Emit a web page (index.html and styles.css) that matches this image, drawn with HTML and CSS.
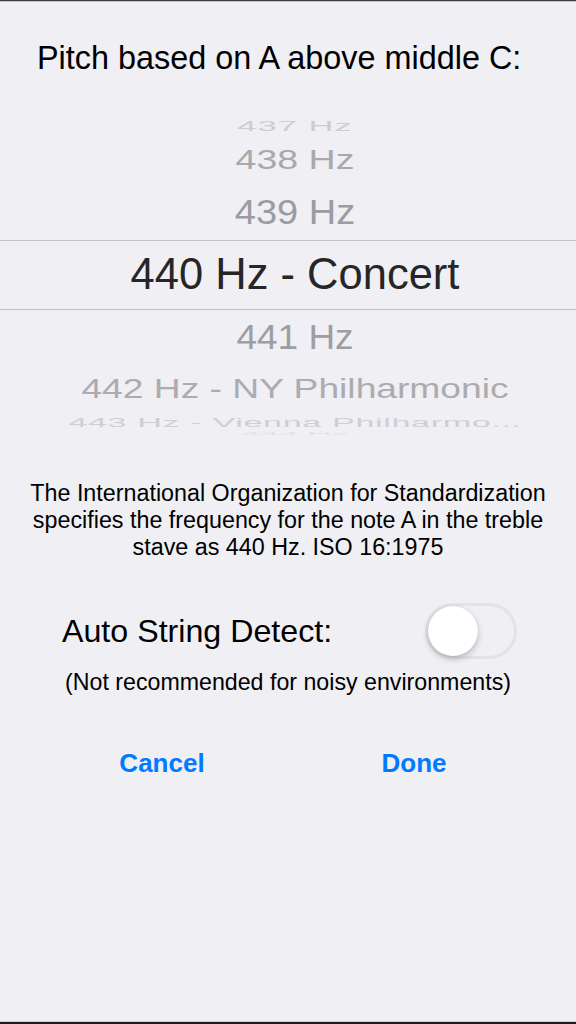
FILE: index.html
```html
<!DOCTYPE html>
<html lang="en">
<head>
  <meta charset="UTF-8">
  <title>Pitch Settings</title>
  <link rel="stylesheet" href="styles.css">
</head>
<body>
<div class="screen">
  <h1 class="title">Pitch based on A above middle C:</h1>

  <!-- wheel picker: rows further from the middle are squashed and faded -->
  <div class="picker">
    <div class="picker-row r-3"><span>437 Hz</span></div>
    <div class="picker-row r-2"><span>438 Hz</span></div>
    <div class="picker-row r-1"><span>439 Hz</span></div>
    <div class="picker-row selected"><span>440 Hz - Concert</span></div>
    <div class="picker-row r1"><span>441 Hz</span></div>
    <div class="picker-row r2"><span>442 Hz - NY Philharmonic</span></div>
    <div class="picker-row r3"><span>443 Hz - Vienna Philharmo...</span></div>
    <div class="picker-row r4"><span>444 Hz</span></div>
  </div>

  <p class="about">The International Organization for Standardization<br>
    specifies the frequency for the note A in the treble<br>
    stave as 440 Hz. ISO 16:1975</p>

  <div class="switch-row">
    <span class="switch-label">Auto String Detect:</span>
    <span class="switch"><span class="knob"></span></span>
  </div>
  <p class="note">(Not recommended for noisy environments)</p>

  <div class="actions">
    <button class="action">Cancel</button>
    <button class="action">Done</button>
  </div>
</div>
</body>
</html>
```

FILE: styles.css
```css
body {
  margin: 0;
  padding: 0;
  background: #efeff4;
  font-family: "Liberation Sans", Arial, sans-serif;
  color: #000;
}

.screen {
  height: 1024px;
  box-sizing: border-box;
  padding-top: 38px;
  border-top: 1px solid #3a3a3c;
  border-bottom: 2px solid #1c1c1e;
  box-shadow: inset 0 1px 0 #c4c4c8, inset 0 -1px 0 #cfcfd4;
  text-align: center;
}

.title {
  margin: 0;
  padding-left: 37px;
  text-align: left;
  font-size: 32.4px;
  font-weight: normal;
  line-height: 38px;
}

/* picker */
.picker {
  margin-top: 33px;
}

.picker-row {
  display: flex;
  justify-content: center;
  align-items: center;
  box-sizing: border-box;
  padding-left: 14px;
  white-space: nowrap;
}

.picker-row span {
  display: inline-block;
  line-height: 1;
}

.r-3 { height: 32px; }
.r-3 span { font-size: 34.5px; letter-spacing: 1px; color: #cdcdd1; transform: scaleY(0.4); }

.r-2 { height: 36px; }
.r-2 span { font-size: 37.5px; color: #a9a9ad; transform: scaleY(0.76); }

.r-1 { height: 62px; padding-top: 6px; }
.r-1 span { font-size: 38px; color: #9c9ca0; transform: scaleY(0.94); }

.selected {
  height: 70px;
  border-top: 1px solid #c2c2c7;
  border-bottom: 1px solid #c2c2c7;
}
.selected span { font-size: 43.5px; color: #262626; }

.r1 { height: 54px; }
.r1 span { font-size: 37px; color: #9e9ea2; transform: scaleY(0.96); }

.r2 { height: 50px; }
.r2 span { font-size: 37.2px; color: #acacb0; transform: scaleY(0.74); }

.r3 { height: 16px; }
.r3 span { font-size: 34.2px; letter-spacing: 0.6px; color: #cfcfd3; transform: scaleY(0.4); }

.r4 { height: 8px; }
.r4 span { font-size: 34px; color: #e2e2e6; transform: scaleY(0.08); }

.about {
  margin: 42px 0 0;
  font-size: 23.3px;
  line-height: 27px;
}

/* auto detect switch */
.switch-row {
  margin-top: 42px;
  padding: 0 59px 0 62px;
  display: flex;
  justify-content: space-between;
  align-items: center;
}

.switch-label {
  font-size: 32.2px;
}

.switch {
  width: 92px;
  height: 56px;
  box-sizing: border-box;
  border: 3px solid #e3e3e7;
  border-radius: 28px;
  display: flex;
  align-items: center;
}

.knob {
  width: 50px;
  height: 50px;
  border-radius: 50%;
  background: #fff;
  box-shadow: 0 3px 6px rgba(0, 0, 0, 0.22), 0 0 1px rgba(0, 0, 0, 0.15);
}

.note {
  margin: 10px 0 0;
  font-size: 23.2px;
  line-height: 27px;
}

.actions {
  margin-top: 52px;
  padding: 0 36px;
  display: grid;
  grid-template-columns: 1fr 1fr;
}

.action {
  background: none;
  border: 0;
  padding: 0;
  font-family: inherit;
  font-size: 26px;
  font-weight: bold;
  line-height: 30px;
  color: #007aff;
  cursor: pointer;
}
```
